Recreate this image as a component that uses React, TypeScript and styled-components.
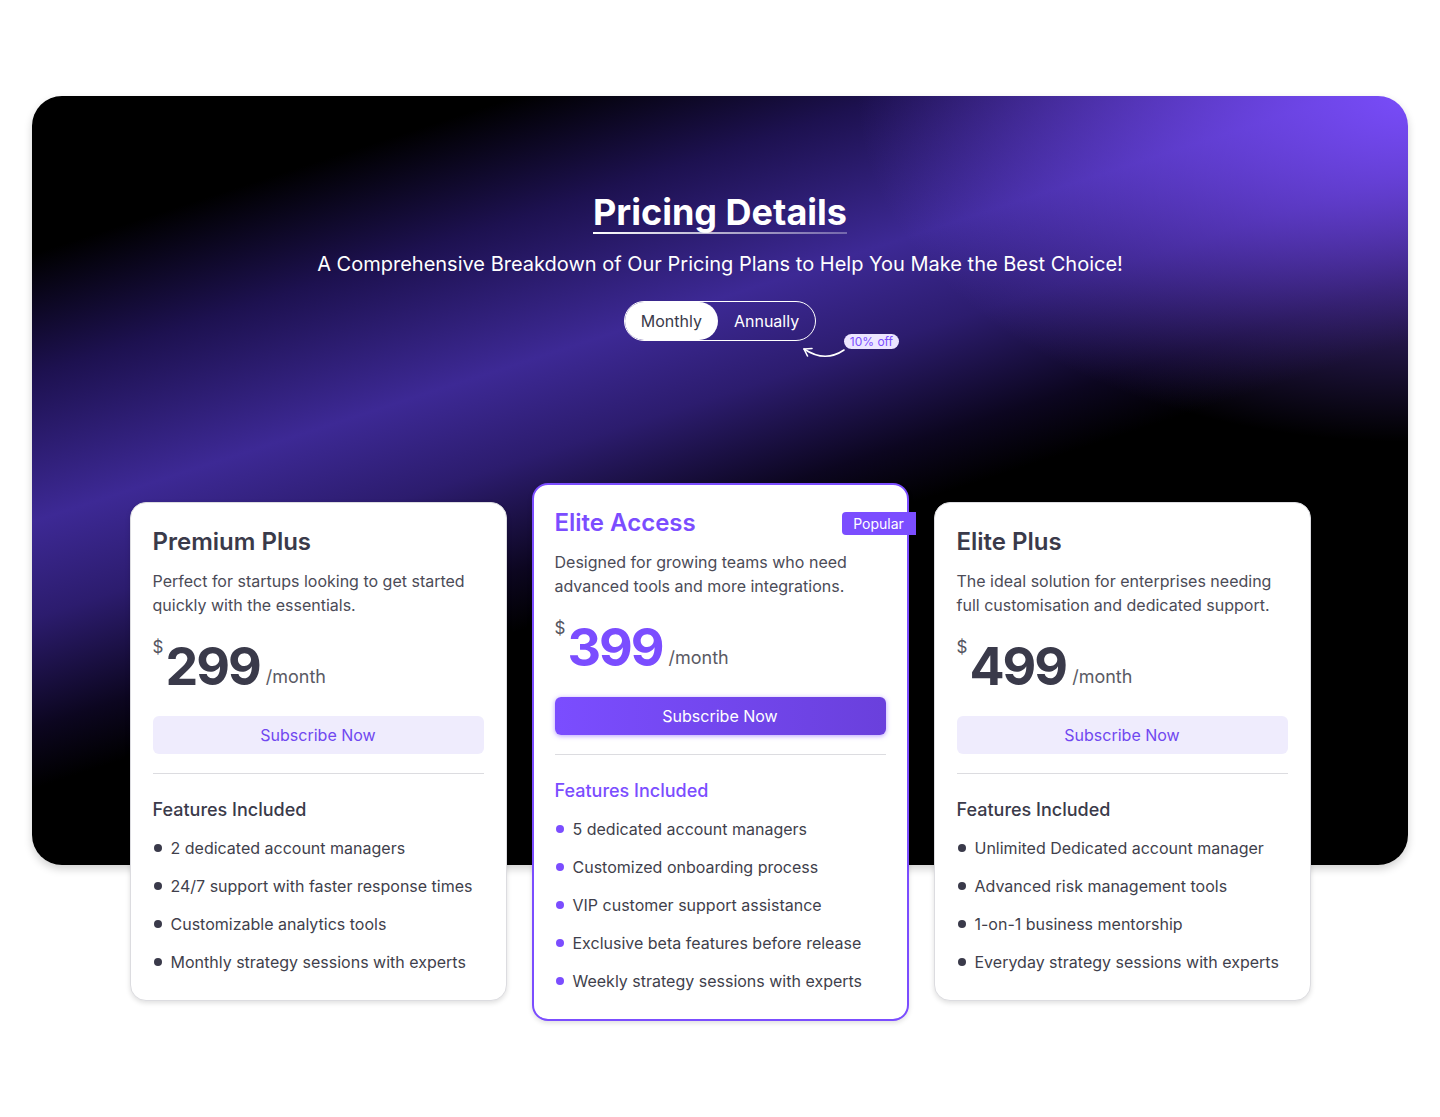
import * as React from 'react';
import styled, { createGlobalStyle } from 'styled-components';

const GlobalStyle = createGlobalStyle`
    body {
        margin: 0;
        background: #ffffff;
        font-family: Inter, "Noto Sans", "Liberation Sans", sans-serif;
        color: #3a3a4a;
    }
    * { box-sizing: border-box; }
`;

const Page = styled.div`
    padding: 96px 32px 90px;
`;

const Hero = styled.section`
    height: 769px;
    border-radius: 30px;
    padding-top: 94px;
    display: flex;
    flex-direction: column;
    align-items: center;
    box-shadow: 0 4px 8px rgba(0, 0, 0, 0.18);
    background:
        radial-gradient(ellipse 40% 45% at 100% 0%, rgba(124, 78, 255, 0.95), rgba(124, 78, 255, 0) 100%),
        linear-gradient(162deg, #000 13%, #1d1150 23%, #3d2995 35%, #2c1c6e 43%, #0c0620 52%, #000 57%);
`;

const Title = styled.h1`
    position: relative;
    margin: 0;
    font-size: 36px;
    line-height: 44px;
    font-weight: 700;
    color: #ffffff;
    &::after {
        content: '';
        position: absolute;
        left: 0;
        right: 0;
        bottom: 0;
        height: 2px;
        background: linear-gradient(90deg, #ffffff 0%, rgba(255, 255, 255, 0.3) 100%);
    }
`;

const Subtitle = styled.p`
    margin: 16px 0 0;
    font-size: 20px;
    line-height: 28px;
    color: #ffffff;
`;

const ToggleWrap = styled.div`
    position: relative;
    margin-top: 23px;
`;

const Toggle = styled.div`
    display: flex;
    height: 40px;
    border: 1px solid #ffffff;
    border-radius: 20px;
`;

const ToggleOption = styled.button<{ $active?: boolean }>`
    border: none;
    border-radius: 20px;
    padding: 0 16px;
    font-family: inherit;
    font-size: 16px;
    background: ${(p) => (p.$active ? '#ffffff' : 'transparent')};
    color: ${(p) => (p.$active ? '#3a3a4a' : '#ffffff')};
    cursor: pointer;
`;

const OffBadge = styled.span`
    position: absolute;
    left: 220px;
    top: 33px;
    height: 15px;
    padding: 0 6px;
    border-radius: 8px;
    background: #ece6ff;
    color: #7b4dff;
    font-size: 12px;
    line-height: 15px;
    white-space: nowrap;
`;

const Arrow = styled.svg`
    position: absolute;
    left: 175px;
    top: 42px;
`;

const Cards = styled.div`
    position: relative;
    margin-top: -382px;
    display: flex;
    justify-content: center;
    align-items: flex-start;
    gap: 25px;
`;

const Card = styled.div<{ $featured?: boolean }>`
    position: relative;
    width: 377px;
    margin-top: ${(p) => (p.$featured ? '0' : '19px')};
    padding: ${(p) => (p.$featured ? '23px 21px 26px' : '24px 22px 26px')};
    border: ${(p) => (p.$featured ? '2px solid #7b4dff' : '1px solid #dcdce0')};
    border-radius: 16px;
    background: #ffffff;
    box-shadow: 0 2px 5px rgba(0, 0, 0, 0.13);
`;

const PopularBadge = styled.span`
    position: absolute;
    top: 27px;
    right: -9px;
    width: 74px;
    height: 23px;
    border-radius: 4px 0 0 4px;
    background: #7b4dff;
    color: #ffffff;
    font-size: 14px;
    line-height: 23px;
    text-align: center;
`;

const PlanName = styled.h2<{ $featured?: boolean }>`
    margin: 0;
    font-size: 24px;
    line-height: 30px;
    font-weight: 600;
    color: ${(p) => (p.$featured ? '#7b4dff' : '#3a3a4a')};
`;

const Description = styled.p`
    margin: 12px 0 0;
    font-size: 16px;
    line-height: 24px;
    color: #4b4b57;
`;

const PriceRow = styled.div`
    margin-top: 20px;
    display: flex;
    align-items: baseline;
`;

const Dollar = styled.span`
    align-self: flex-start;
    font-size: 17px;
    line-height: 20px;
    color: #55555f;
    margin-right: 2px;
`;

const Amount = styled.span<{ $featured?: boolean }>`
    font-size: 52px;
    line-height: 60px;
    font-weight: 700;
    letter-spacing: -2px;
    color: ${(p) => (p.$featured ? '#7b4dff' : '#3a3a4a')};
`;

const Period = styled.span`
    margin-left: 6px;
    font-size: 18px;
    color: #5a5a64;
    position: relative;
    top: -2px;
`;

const SubscribeButton = styled.button<{ $featured?: boolean }>`
    display: block;
    width: 100%;
    height: 38px;
    margin-top: 19px;
    border: none;
    border-radius: 6px;
    font-family: inherit;
    font-size: 16px;
    cursor: pointer;
    background: ${(p) => (p.$featured ? 'linear-gradient(90deg, #7b4dff 0%, #6a40dc 100%)' : '#efecfd')};
    color: ${(p) => (p.$featured ? '#ffffff' : '#7048f0')};
    box-shadow: ${(p) => (p.$featured ? '0 1px 5px rgba(123, 77, 255, 0.55)' : 'none')};
`;

const Divider = styled.hr`
    margin: 19px 0 0;
    border: none;
    height: 1px;
    background: #dcdce0;
`;

const FeaturesTitle = styled.h3<{ $featured?: boolean }>`
    margin: 23px 0 0;
    font-size: 18px;
    line-height: 26px;
    font-weight: 500;
    color: ${(p) => (p.$featured ? '#7b4dff' : '#3a3a4a')};
`;

const FeatureList = styled.ul`
    list-style: none;
    margin: 13px 0 0;
    padding: 0;
    display: flex;
    flex-direction: column;
    gap: 14px;
`;

const Feature = styled.li<{ $featured?: boolean }>`
    display: flex;
    align-items: center;
    gap: 9px;
    font-size: 16px;
    line-height: 24px;
    color: #3f3f4c;
    &::before {
        content: '';
        width: 8px;
        height: 8px;
        margin-left: 1px;
        border-radius: 50%;
        background: ${(p) => (p.$featured ? '#7b4dff' : '#3a3a4a')};
        flex-shrink: 0;
    }
`;

interface Plan {
    name: string;
    description: string;
    price: string;
    features: string[];
    featured?: boolean;
}

const plans: Plan[] = [
    {
        name: 'Premium Plus',
        description: 'Perfect for startups looking to get started quickly with the essentials.',
        price: '299',
        features: [
            '2 dedicated account managers',
            '24/7 support with faster response times',
            'Customizable analytics tools',
            'Monthly strategy sessions with experts',
        ],
    },
    {
        name: 'Elite Access',
        description: 'Designed for growing teams who need advanced tools and more integrations.',
        price: '399',
        featured: true,
        features: [
            '5 dedicated account managers',
            'Customized onboarding process',
            'VIP customer support assistance',
            'Exclusive beta features before release',
            'Weekly strategy sessions with experts',
        ],
    },
    {
        name: 'Elite Plus',
        description: 'The ideal solution for enterprises needing full customisation and dedicated support.',
        price: '499',
        features: [
            'Unlimited Dedicated account manager',
            'Advanced risk management tools',
            '1-on-1 business mentorship',
            'Everyday strategy sessions with experts',
        ],
    },
];

function PlanCard({ plan }: { plan: Plan }): JSX.Element {
    const f = plan.featured;
    return (
        <Card $featured={f}>
            {f && <PopularBadge>Popular</PopularBadge>}
            <PlanName $featured={f}>{plan.name}</PlanName>
            <Description>{plan.description}</Description>
            <PriceRow>
                <Dollar>$</Dollar>
                <Amount $featured={f}>{plan.price}</Amount>
                <Period>/month</Period>
            </PriceRow>
            <SubscribeButton $featured={f} type="button">Subscribe Now</SubscribeButton>
            <Divider />
            <FeaturesTitle $featured={f}>Features Included</FeaturesTitle>
            <FeatureList>
                {plan.features.map((item) => (
                    <Feature key={item} $featured={f}>{item}</Feature>
                ))}
            </FeatureList>
        </Card>
    );
}

export default function App(): JSX.Element {
    const [annual, setAnnual] = React.useState(false);
    return (
        <Page>
            <GlobalStyle />
            <Hero>
                <Title>Pricing Details</Title>
                <Subtitle>A Comprehensive Breakdown of Our Pricing Plans to Help You Make the Best Choice!</Subtitle>
                <ToggleWrap>
                    <Toggle>
                        <ToggleOption $active={!annual} onClick={() => setAnnual(false)}>Monthly</ToggleOption>
                        <ToggleOption $active={annual} onClick={() => setAnnual(true)}>Annually</ToggleOption>
                    </Toggle>
                    <Arrow width="48" height="20" viewBox="0 0 48 20" fill="none">
                        <path d="M45 7 Q 26 20 5 6" stroke="#ffffff" strokeWidth="1.6" strokeLinecap="round" fill="none" />
                        <path d="M5 6 L13 5.5 M5 6 L8.5 13" stroke="#ffffff" strokeWidth="1.6" strokeLinecap="round" />
                    </Arrow>
                    <OffBadge>10% off</OffBadge>
                </ToggleWrap>
            </Hero>
            <Cards>
                {plans.map((plan) => (
                    <PlanCard key={plan.name} plan={plan} />
                ))}
            </Cards>
        </Page>
    );
}
